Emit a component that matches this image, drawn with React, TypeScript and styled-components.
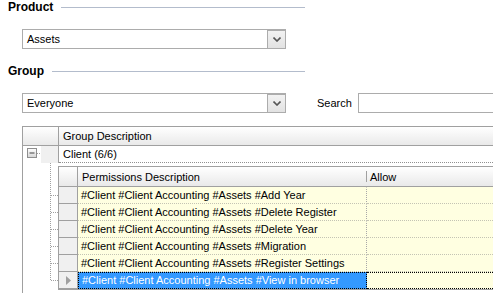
import styled, { createGlobalStyle } from "styled-components";

const GlobalStyle = createGlobalStyle`
  html, body {
    margin: 0;
    padding: 0;
    background: #ffffff;
    overflow: hidden;
  }
  body {
    font-family: "Liberation Sans", Arial, sans-serif;
    font-size: 11px;
    color: #000000;
  }
`;

const permissions = [
  "#Client #Client Accounting #Assets #Add Year",
  "#Client #Client Accounting #Assets #Delete Register",
  "#Client #Client Accounting #Assets #Delete Year",
  "#Client #Client Accounting #Assets #Migration",
  "#Client #Client Accounting #Assets #Register Settings",
  "#Client #Client Accounting #Assets #View in browser",
];

const SELECTED = 5;
const ROW_H = 17;

const Page = styled.div`
  width: 100vw;
  height: 100vh;
  overflow: hidden;
  display: flex;
  flex-direction: column;
`;

const SectionHeader = styled.div<{ $top: number }>`
  display: flex;
  align-items: center;
  width: 297px;
  height: 14px;
  padding-left: 8px;
  margin-top: ${(p) => p.$top}px;
  flex-shrink: 0;
`;

const SectionLabel = styled.span`
  font-weight: bold;
  font-size: 12px;
  line-height: 14px;
`;

const SectionLine = styled.div`
  flex: 1;
  height: 1px;
  margin-left: 8px;
  background: #b3bccc;
`;

const FieldRow = styled.div`
  display: flex;
  align-items: center;
  margin-top: 15px;
  padding-left: 22px;
  height: 20px;
  flex-shrink: 0;
`;

const Combo = styled.div`
  box-sizing: border-box;
  display: flex;
  flex-shrink: 0;
  width: 264px;
  height: 20px;
  border: 1px solid #acacac;
  background: #ffffff;
`;

const ComboText = styled.div`
  flex: 1;
  padding-left: 4px;
  line-height: 18px;
`;

const ComboButton = styled.div`
  box-sizing: border-box;
  width: 18px;
  height: 18px;
  border: 1px solid #acacac;
  border-right: none;
  border-bottom: none;
  background: linear-gradient(#f2f2f2, #e2e2e2);
  display: flex;
  align-items: center;
  justify-content: center;
`;

const SearchLabel = styled.span`
  margin-left: 31px;
  margin-right: 6px;
  line-height: 20px;
`;

const SearchInput = styled.div`
  box-sizing: border-box;
  flex: 1;
  min-width: 200px;
  margin-right: -20px;
  height: 20px;
  border: 1px solid #acacac;
  background: #ffffff;
`;

const Grid = styled.div`
  flex: 1;
  margin-top: 13px;
  margin-left: 22px;
  margin-right: -40px;
  border-left: 1px solid #a0a0a0;
  border-top: 1px solid #a0a0a0;
`;

const HeaderRow = styled.div<{ $h: number }>`
  display: flex;
  height: ${(p) => p.$h}px;
  border-bottom: 1px solid #a0a0a0;
  background: linear-gradient(#ffffff, #f4f4f4 50%, #e9e9e9);
`;

const IndicatorHead = styled.div<{ $w: number }>`
  width: ${(p) => p.$w}px;
  flex-shrink: 0;
  border-right: 1px solid #a0a0a0;
`;

const HeadCell = styled.div<{ $w?: number; $sep?: boolean }>`
  position: relative;
  ${(p) => (p.$w ? `width: ${p.$w}px; flex-shrink: 0;` : "flex: 1;")}
  padding-left: 4px;
  display: flex;
  align-items: center;
  ${(p) =>
    p.$sep &&
    `&::before {
      content: "";
      position: absolute;
      left: 0;
      top: 4px;
      bottom: 4px;
      border-left: 1px solid #a0a0a0;
    }`}
`;

const GroupRow = styled.div`
  display: flex;
  height: 17px;
`;

const ExpandArea = styled.div`
  width: 18px;
  display: flex;
  align-items: flex-start;
  padding-top: 2px;
  box-sizing: border-box;
`;

const GroupIndicator = styled.div`
  width: 17px;
  background: #f0f0f0;
  border-right: 1px solid #a0a0a0;
`;

const GroupCell = styled.div`
  flex: 1;
  padding-left: 4px;
  line-height: 16px;
  border-bottom: 1px dotted #909090;
`;

const DetailArea = styled.div`
  display: flex;
`;

const TreeIndent = styled.div`
  width: 35px;
  flex-shrink: 0;
`;

const DetailGrid = styled.div`
  flex: 1;
  margin-top: 3px;
  border-left: 1px solid #a0a0a0;
  border-top: 1px solid #a0a0a0;
  border-bottom: 1px solid #a0a0a0;
`;

const DataRow = styled.div`
  display: flex;
  height: ${ROW_H}px;
`;

const RowIndicator = styled.div`
  width: 18px;
  flex-shrink: 0;
  background: #f0f0f0;
  border-right: 1px solid #a0a0a0;
  border-bottom: 1px solid #a0a0a0;
  display: flex;
  align-items: center;
  justify-content: center;
`;

const DataCell = styled.div<{ $w?: number; $selected?: boolean }>`
  box-sizing: border-box;
  ${(p) => (p.$w ? `width: ${p.$w}px; flex-shrink: 0;` : "flex: 1;")}
  padding-left: 3px;
  line-height: 15px;
  white-space: nowrap;
  overflow: hidden;
  background: ${(p) => (p.$selected && p.$w ? "#3399ff" : "#ffffe1")};
  color: ${(p) => (p.$selected ? "#ffffff" : "#000000")};
  border-bottom: 1px dotted ${(p) => (p.$selected ? "#000000" : "#c4c4b4")};
  border-top: 1px dotted ${(p) => (p.$selected ? "#000000" : "transparent")};
  ${(p) =>
    p.$w
      ? `border-right: 1px dotted ${p.$selected ? "#000000" : "#a8a8a8"};`
      : ""}
  ${(p) => (p.$selected && p.$w ? "border-left: 1px dotted #000000;" : "")}
`;

const Chevron = () => (
  <svg width="8" height="5" viewBox="0 0 8 5">
    <path d="M0.5 0.5 L4 4 L7.5 0.5" fill="none" stroke="#555555" strokeWidth="1.6" />
  </svg>
);

const ExpandBox = () => (
  <svg width="18" height="11" viewBox="0 0 18 11">
    <defs>
      <linearGradient id="eg" x1="0" y1="0" x2="0" y2="1">
        <stop offset="0" stopColor="#ffffff" />
        <stop offset="1" stopColor="#d4d4d4" />
      </linearGradient>
    </defs>
    <rect x="4.5" y="0.5" width="9" height="9" fill="url(#eg)" stroke="#8e8e8e" />
    <line x1="6.5" y1="5" x2="11.5" y2="5" stroke="#444444" strokeWidth="1" />
    <line x1="14" y1="5.5" x2="18" y2="5.5" stroke="#a0a0a0" strokeDasharray="1 1" />
  </svg>
);

const TreeLines = ({ rows }: { rows: number }) => {
  const mids = Array.from({ length: rows }, (_, i) => 32.5 + i * ROW_H);
  const h = mids[mids.length - 1] + 2;
  return (
    <svg width="35" height={h} viewBox={`0 0 35 ${h}`}>
      <line x1="27.5" y1="0" x2="27.5" y2={mids[mids.length - 1]} stroke="#a0a0a0" strokeDasharray="1 1" />
      {mids.map((y) => (
        <line key={y} x1="28" y1={y} x2="35" y2={y} stroke="#a0a0a0" strokeDasharray="1 1" />
      ))}
    </svg>
  );
};

const RowArrow = () => (
  <svg width="5" height="9" viewBox="0 0 5 9">
    <path d="M0 0 L5 4.5 L0 9 Z" fill="#a0a0a0" />
  </svg>
);

const ComboBox = ({ value }: { value: string }) => (
  <Combo>
    <ComboText>{value}</ComboText>
    <ComboButton>
      <Chevron />
    </ComboButton>
  </Combo>
);

export default function App() {
  return (
    <>
      <GlobalStyle />
      <Page>
        <SectionHeader $top={0}>
          <SectionLabel>Product</SectionLabel>
          <SectionLine />
        </SectionHeader>
        <FieldRow>
          <ComboBox value="Assets" />
        </FieldRow>
        <SectionHeader $top={15}>
          <SectionLabel>Group</SectionLabel>
          <SectionLine />
        </SectionHeader>
        <FieldRow>
          <ComboBox value="Everyone" />
          <SearchLabel>Search</SearchLabel>
          <SearchInput />
        </FieldRow>

        <Grid>
          <HeaderRow $h={18}>
            <IndicatorHead $w={35} />
            <HeadCell>Group Description</HeadCell>
          </HeaderRow>
          <GroupRow>
            <ExpandArea>
              <ExpandBox />
            </ExpandArea>
            <GroupIndicator />
            <GroupCell>Client (6/6)</GroupCell>
          </GroupRow>
          <DetailArea>
            <TreeIndent>
              <TreeLines rows={permissions.length} />
            </TreeIndent>
            <DetailGrid>
              <HeaderRow $h={19}>
                <IndicatorHead $w={18} />
                <HeadCell $w={284}>Permissions Description</HeadCell>
                <HeadCell $sep>Allow</HeadCell>
              </HeaderRow>
              {permissions.map((p, i) => (
                <DataRow key={p}>
                  <RowIndicator>{i === SELECTED && <RowArrow />}</RowIndicator>
                  <DataCell $w={289} $selected={i === SELECTED}>
                    {p}
                  </DataCell>
                  <DataCell $selected={i === SELECTED} />
                </DataRow>
              ))}
            </DetailGrid>
          </DetailArea>
        </Grid>
      </Page>
    </>
  );
}
